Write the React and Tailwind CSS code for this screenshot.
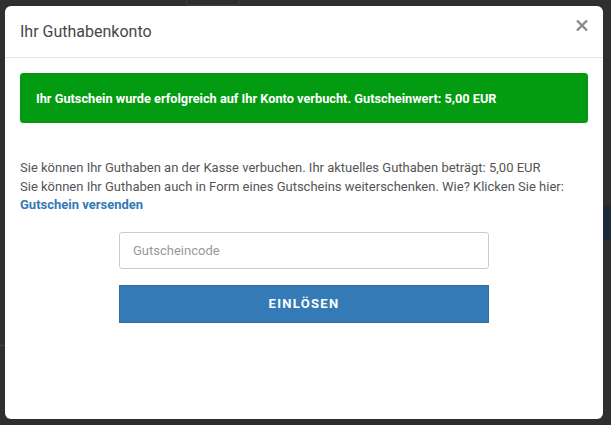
export default function App() {
  return (
    <div className="relative h-[425px] w-[611px] overflow-hidden bg-[#2f2f2f] pl-[5px] pt-[6px] font-['Roboto',sans-serif]">
      {/* page behind the backdrop */}
      <div className="absolute left-[186px] top-[-6px] h-[12px] w-[54px] rounded-[4px] border border-[#3c3c3c]" />
      <div className="absolute right-0 top-[205px] h-[35px] w-[8px] bg-[#1d2a38]" />
      <div className="absolute left-0 top-[345px] h-px w-[5px] bg-[#444]" />

      <div className="relative flex h-[413px] w-[598px] flex-col rounded-[6px] bg-white">
        <div className="flex h-[52px] items-center justify-between border-b border-[#e5e5e5] pl-[15px] pr-[15px]">
          <h4 className="text-[16px] text-[#474747]">Ihr Guthabenkonto</h4>
          <button className="mb-[12px] text-[#8a8a8a]">
            <svg width="12" height="13" viewBox="0 0 12 13">
              <path d="M1 1.5 L11 11.5 M11 1.5 L1 11.5" stroke="currentColor" strokeWidth="2.4" />
            </svg>
          </button>
        </div>

        <div className="px-[15px] pt-[15px]">
          <div className="flex h-[50px] items-center rounded-[3px] border border-[#0a9115] bg-[#029b12] px-[15px] pt-[2px] text-[12.75px] font-bold text-white">
            Ihr Gutschein wurde erfolgreich auf Ihr Konto verbucht. Gutscheinwert: 5,00 EUR
          </div>

          <p className="mt-[36px] text-[13px] leading-[18.6px] text-[#555]">
            Sie können Ihr Guthaben an der Kasse verbuchen. Ihr aktuelles Guthaben beträgt: 5,00 EUR
            <br />
            Sie können Ihr Guthaben auch in Form eines Gutscheins weiterschenken. Wie? Klicken Sie hier:
            <br />
            <a className="font-bold text-[#337ab7]">Gutschein versenden</a>
          </p>

          <div className="mx-auto mt-[17px] flex w-[370px] flex-col gap-[16px]">
            <input
              className="h-[37px] w-full rounded-[3px] border border-[#cccccc] px-[13px] text-[13px] text-[#555] placeholder:text-[#999] outline-none"
              placeholder="Gutscheincode"
            />
            <button className="h-[38px] w-full border border-[#2e6da4] bg-[#337ab7] text-[13px] font-bold tracking-[1.3px] text-white">
              EINLÖSEN
            </button>
          </div>
        </div>
      </div>
    </div>
  )
}
